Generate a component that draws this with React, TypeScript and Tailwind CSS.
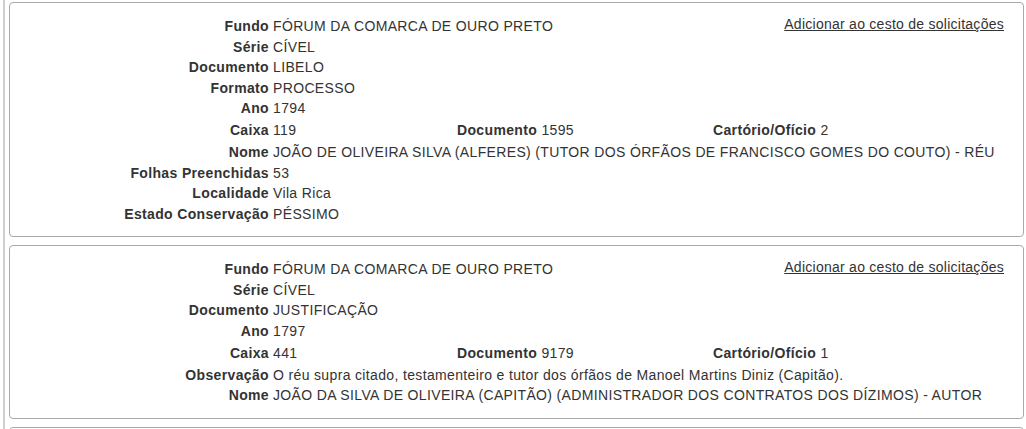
type Field = { label: string; value: string }

type Record = {
  before: Field[]
  caixa: string
  documento: string
  cartorio: string
  after: Field[]
}

const records: Record[] = [
  {
    before: [
      { label: 'Fundo', value: 'FÓRUM DA COMARCA DE OURO PRETO' },
      { label: 'Série', value: 'CÍVEL' },
      { label: 'Documento', value: 'LIBELO' },
      { label: 'Formato', value: 'PROCESSO' },
      { label: 'Ano', value: '1794' },
    ],
    caixa: '119',
    documento: '1595',
    cartorio: '2',
    after: [
      { label: 'Nome', value: 'JOÃO DE OLIVEIRA SILVA (ALFERES) (TUTOR DOS ÓRFÃOS DE FRANCISCO GOMES DO COUTO) - RÉU' },
      { label: 'Folhas Preenchidas', value: '53' },
      { label: 'Localidade', value: 'Vila Rica' },
      { label: 'Estado Conservação', value: 'PÉSSIMO' },
    ],
  },
  {
    before: [
      { label: 'Fundo', value: 'FÓRUM DA COMARCA DE OURO PRETO' },
      { label: 'Série', value: 'CÍVEL' },
      { label: 'Documento', value: 'JUSTIFICAÇÃO' },
      { label: 'Ano', value: '1797' },
    ],
    caixa: '441',
    documento: '9179',
    cartorio: '1',
    after: [
      { label: 'Observação', value: 'O réu supra citado, testamenteiro e tutor dos órfãos de Manoel Martins Diniz (Capitão).' },
      { label: 'Nome', value: 'JOÃO DA SILVA DE OLIVEIRA (CAPITÃO) (ADMINISTRADOR DOS CONTRATOS DOS DÍZIMOS) - AUTOR' },
    ],
  },
]

const Row = ({ field, link }: { field: Field; link?: boolean }) => (
  <div className="flex leading-[20.5px]">
    <span className="w-[259px] shrink-0 text-right font-bold">{field.label}</span>
    <span className="ml-1">{field.value}</span>
    {link && (
      <a href="#" className="ml-auto mr-[19px] relative -top-[2px] underline tracking-[0.26px]">
        Adicionar ao cesto de solicitações
      </a>
    )}
  </div>
)

const RecordCard = ({ record }: { record: Record }) => (
  <div className="border border-[#a9a9a9] rounded-[4px] pt-[13px] pb-[12px]">
    {record.before.map((f, i) => (
      <Row key={f.label} field={f} link={i === 0} />
    ))}
    <div className="flex leading-[20.5px] pt-[1.5px] pb-[1.5px]">
      <div className="w-[447px] shrink-0 flex">
        <span className="w-[259px] shrink-0 text-right font-bold">Caixa</span>
        <span className="ml-1">{record.caixa}</span>
      </div>
      <div className="w-[256px] shrink-0">
        <span className="font-bold">Documento</span> {record.documento}
      </div>
      <div>
        <span className="font-bold">Cartório/Ofício</span> {record.cartorio}
      </div>
    </div>
    {record.after.map((f) => (
      <Row key={f.label} field={f} />
    ))}
  </div>
)

export default function App() {
  return (
    <div className="w-[1026px] h-[429px] overflow-hidden bg-white text-[14px] tracking-[0.35px] text-[#333] font-['Liberation_Sans',Arial,sans-serif]">
      <div className="ml-[3px] border-l-2 border-[#cfcfcf] pl-[4px] pr-[2px] pt-[2px] flex flex-col gap-[8px] min-h-[429px]">
        {records.map((r, i) => (
          <RecordCard key={i} record={r} />
        ))}
        <div className="border border-[#a9a9a9] rounded-[4px] h-[60px]" />
      </div>
    </div>
  )
}
